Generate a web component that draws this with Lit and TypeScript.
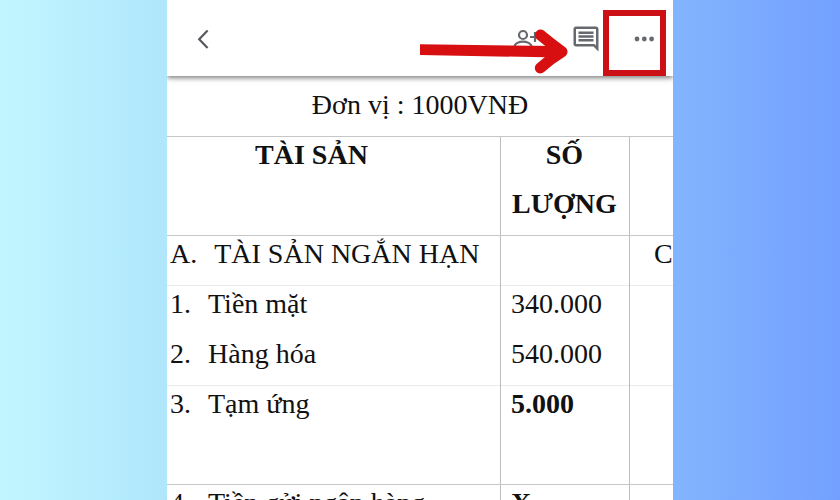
import { LitElement, html, css, nothing } from "lit";
import { customElement } from "lit/decorators.js";
import { classMap } from "lit/directives/class-map.js";

interface Row {
  mark: string;
  name: string;
  amount: string;
  note?: string;
  rule: "dark" | "faint" | "none";
  strong?: boolean;
  tall?: boolean;
}

const ROWS: Row[] = [
  { mark: "A.", name: "TÀI SẢN NGẮN HẠN", amount: "", note: "C", rule: "dark" },
  { mark: "1.", name: "Tiền mặt", amount: "340.000", rule: "faint" },
  { mark: "2.", name: "Hàng hóa", amount: "540.000", rule: "none" },
  { mark: "3.", name: "Tạm ứng", amount: "5.000", rule: "faint", strong: true, tall: true },
  { mark: "4.", name: "Tiền gửi ngân hàng", amount: "X", rule: "dark", strong: true },
];

@customElement("top-bar")
class TopBar extends LitElement {
  static styles = css`
    :host {
      display: block;
      position: relative;
      z-index: 1;
      background: #fff;
      box-shadow: 0 2px 5px rgba(0, 0, 0, 0.5);
    }
    .bar {
      display: flex;
      align-items: flex-end;
      height: 76px;
      padding-right: 7px;
    }
    button {
      display: flex;
      align-items: center;
      justify-content: center;
      box-sizing: border-box;
      height: 74px;
      padding: 0;
      border: 0;
      background: none;
      color: #66696d;
    }
    .back {
      width: 73px;
      margin-right: auto;
    }
    .share {
      width: 86px;
    }
    .comment {
      width: 34px;
    }
    .more {
      width: 63px;
      height: 66px;
      padding: 0 0 8px 19px;
      border: 6px solid #cc1116;
    }
    .arrow {
      position: absolute;
      top: 28px;
      right: 104px;
      pointer-events: none;
    }
    svg {
      display: block;
      flex: none;
    }
  `;

  render() {
    return html`
      <div class="bar">
        <button class="back" aria-label="Quay lại">
          <svg width="24" height="24" viewBox="0 0 24 24" fill="none" stroke="#55585c" stroke-width="2.2">
            <path d="M16.6 3.6 8.2 12.2l8.4 8.8" />
          </svg>
        </button>
        <button class="share" aria-label="Chia sẻ">
          <svg width="30" height="30" viewBox="0 0 30 30" fill="none" stroke="currentColor" stroke-width="2.2">
            <circle cx="12" cy="11" r="4" />
            <path d="M3.6 24v-1.6c0-3 4.8-4.8 8.4-4.8s8.400 1.8 8.400 4.800V24zM19 13h10M24 8v10" />
          </svg>
        </button>
        <button class="comment" aria-label="Nhận xét">
          <svg width="30" height="30" viewBox="0 0 24 24" fill="currentColor">
            <path
              d="M21.99 4c0-1.1-.89-2-1.99-2H4c-1.1 0-2 .9-2 2v12c0 1.1.9 2 2 2h14l4 4-.01-18zM20 4v13.17L18.83 16H4V4h16zM6 12h12v2H6zm0-3h12v2H6zm0-3h12v2H6z"
            />
          </svg>
        </button>
        <button class="more" aria-label="Thêm">
          <svg width="22" height="8" viewBox="0 0 22 8" fill="currentColor">
            <circle cx="4" cy="4" r="2.4" />
            <circle cx="11.3" cy="4" r="2.4" />
            <circle cx="18.6" cy="4" r="2.4" />
          </svg>
        </button>
      </div>
      <svg class="arrow" width="149" height="48" viewBox="0 0 149 48" aria-hidden="true">
        <path d="M0 16.3 138 18v11.500L0 27z" fill="#d80f10" />
        <path
          d="M120.5 7Q130 15 142 23.7Q130 31 120.3 40"
          fill="none"
          stroke="#d80f10"
          stroke-width="11"
          stroke-linecap="round"
          stroke-linejoin="round"
        />
      </svg>
    `;
  }
}

@customElement("asset-sheet")
class AssetSheet extends LitElement {
  static styles = css`
    :host {
      display: block;
      color: #111;
      font: 28px/36px "Liberation Serif", "Times New Roman", serif;
    }
    .unit {
      margin: 0;
      padding: 11px 0 13px;
      text-align: center;
    }
    table {
      width: 100%;
      table-layout: fixed;
      border-collapse: separate;
      border-spacing: 0;
    }
    .col-name {
      width: 333px;
    }
    .col-amount {
      width: 129px;
    }
    th,
    td {
      box-sizing: border-box;
      height: 50px;
      padding: 0;
      border-top: 1px solid #c6c6c6;
      text-align: left;
      vertical-align: top;
      white-space: nowrap;
    }
    /* Painted under the top border so the column rules stay unbroken. */
    .amount,
    .note {
      background: linear-gradient(#bdbdbd, #bdbdbd) border-box 0 0 / 1px 100% no-repeat;
    }
    th {
      height: 99px;
      text-align: center;
    }
    th.name {
      padding-right: 44px;
    }
    .word {
      display: block;
      margin-bottom: 13px;
    }
    .word:last-child {
      margin-bottom: 0;
    }
    .faint td {
      border-top-color: rgba(0, 0, 0, 0.08);
    }
    .none td {
      border-top-color: transparent;
    }
    .tall td {
      height: 99px;
    }
    .entry {
      display: flex;
      gap: 17px;
      padding-left: 3px;
    }
    td.amount {
      padding-left: 11px;
    }
    td.note {
      padding-left: 25px;
    }
    .strong .amount {
      font-weight: 700;
    }
  `;

  render() {
    return html`
      <p class="unit">Đơn vị : 1000VNĐ</p>
      <table>
        <colgroup>
          <col class="col-name" />
          <col class="col-amount" />
          <col />
        </colgroup>
        <thead>
          <tr>
            <th class="name" scope="col">TÀI SẢN</th>
            <th class="amount" scope="col">
              <span class="word">SỐ</span><span class="word">LƯỢNG</span>
            </th>
            <th class="note" scope="col"></th>
          </tr>
        </thead>
        <tbody>
          ${ROWS.map(
            (row) => html`
              <tr class=${classMap({ [row.rule]: true, strong: !!row.strong, tall: !!row.tall })}>
                <td>
                  <div class="entry"><span>${row.mark}</span><span>${row.name}</span></div>
                </td>
                <td class="amount">${row.amount}</td>
                <td class="note">${row.note ?? nothing}</td>
              </tr>
            `
          )}
        </tbody>
      </table>
    `;
  }
}

@customElement("app-root")
class AppRoot extends LitElement {
  static styles = css`
    :host {
      display: grid;
      grid-template-columns: 1fr 3.03fr 1fr;
      height: 100vh;
      overflow: hidden;
      background: linear-gradient(90deg, #c2f6ff 0%, #afe6fc 20%, #83b4fe 80%, #73a0ff 100%);
    }
    .phone {
      grid-column: 2;
      min-width: 0;
      overflow: hidden;
      background: #fff;
    }
  `;

  render() {
    return html`
      <main class="phone">
        <top-bar></top-bar>
        <asset-sheet></asset-sheet>
      </main>
    `;
  }
}
